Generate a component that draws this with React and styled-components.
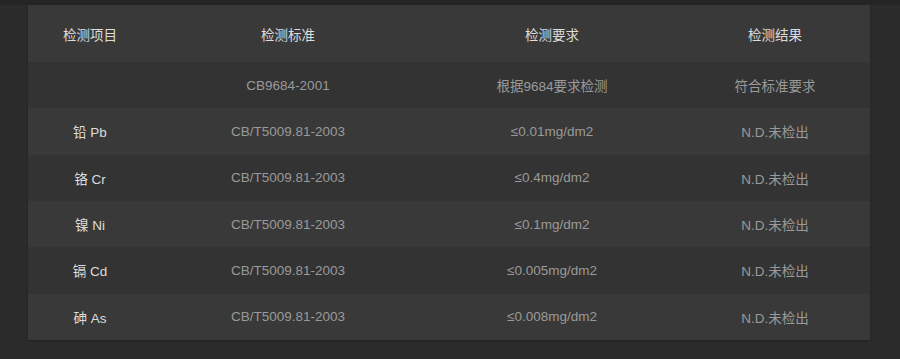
import React from "react";
import styled, { createGlobalStyle } from "styled-components";

const rows = [
  { item: "", standard: "CB9684-2001", req: "根据9684要求检测", result: "符合标准要求" },
  { item: "铅 Pb", standard: "CB/T5009.81-2003", req: "≤0.01mg/dm2", result: "N.D.未检出" },
  { item: "铬 Cr", standard: "CB/T5009.81-2003", req: "≤0.4mg/dm2", result: "N.D.未检出" },
  { item: "镍 Ni", standard: "CB/T5009.81-2003", req: "≤0.1mg/dm2", result: "N.D.未检出" },
  { item: "镉 Cd", standard: "CB/T5009.81-2003", req: "≤0.005mg/dm2", result: "N.D.未检出" },
  { item: "砷 As", standard: "CB/T5009.81-2003", req: "≤0.008mg/dm2", result: "N.D.未检出" },
];

const GlobalStyle = createGlobalStyle`
  body {
    margin: 0;
    background: #2b2b2b;
    font-family: "Liberation Sans", "Noto Sans CJK SC", sans-serif;
  }
`;

const Page = styled.div`
  height: 359px;
  border-top: 5px solid #252525;
  box-sizing: border-box;
  padding-left: 28px;
`;

const Table = styled.div`
  width: 842px;
  display: grid;
  grid-template-columns: 124px 272px 256px 190px;
  box-shadow: 0 1px 2px rgba(0, 0, 0, 0.25);
`;

const Row = styled.div`
  display: contents;
  & > div {
    background: ${(p) => (p.$light ? "#393939" : "#333333")};
    height: ${(p) => (p.$head ? "57px" : "46.33px")};
  }
`;

const Cell = styled.div`
  display: flex;
  align-items: center;
  justify-content: center;
  font-size: 13.5px;
  color: ${(p) => (p.$strong ? "#dcdcdc" : "#9a9a9a")};
  white-space: nowrap;
`;

export default function App() {
  return (
    <>
      <GlobalStyle />
      <Page>
        <Table>
          <Row $light $head>
            <Cell $strong>检测项目</Cell>
            <Cell $strong>检测标准</Cell>
            <Cell $strong>检测要求</Cell>
            <Cell $strong>检测结果</Cell>
          </Row>
          {rows.map((r, i) => (
            <Row key={i} $light={i % 2 === 1}>
              <Cell $strong>{r.item}</Cell>
              <Cell>{r.standard}</Cell>
              <Cell>{r.req}</Cell>
              <Cell>{r.result}</Cell>
            </Row>
          ))}
        </Table>
      </Page>
    </>
  );
}
